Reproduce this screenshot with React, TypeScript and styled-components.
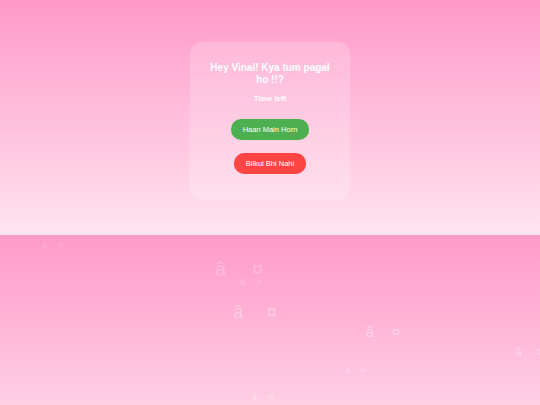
import styled, { createGlobalStyle } from "styled-components";

const GlobalStyle = createGlobalStyle`
  html {
    background: linear-gradient(to bottom, #ff99c8, #ffe4ef);
    background-size: 100% 235px;
    background-repeat: repeat-y;
    min-height: 100%;
  }
  body {
    margin: 0;
    font-family: "Liberation Sans", Arial, sans-serif;
  }
`;

const hearts = [
  { x: 42, y: 242, size: 9, alpha: 0.18 },
  { x: 215, y: 261, size: 20, alpha: 0.25 },
  { x: 240, y: 279, size: 9, alpha: 0.25 },
  { x: 233, y: 305, size: 18, alpha: 0.35 },
  { x: 366, y: 326, size: 14, alpha: 0.4 },
  { x: 515, y: 347, size: 12, alpha: 0.35 },
  { x: 346, y: 368, size: 8, alpha: 0.4 },
  { x: 252, y: 394, size: 9, alpha: 0.45 },
];

const App = () => {
  return (
    <>
      <GlobalStyle />
      <Page>
        <Card>
          <Title>Hey Vinal! Kya tum pagal ho !!?</Title>
          <TimeLeft>Time left</TimeLeft>
          <Actions>
            <Button $tone="yes">Haan Main Horn</Button>
            <Button $tone="no">Bilkul Bhi Nahi</Button>
          </Actions>
        </Card>
      </Page>
      <HeartLayer>
        {hearts.map((h, i) => (
          <Heart
            key={i}
            style={{
              left: h.x,
              top: h.y - h.size * 0.1,
              fontSize: h.size,
              opacity: h.alpha,
            }}
          >
            â¤
          </Heart>
        ))}
      </HeartLayer>
    </>
  );
};

const Page = styled.div`
  display: flex;
  justify-content: center;
  padding: 42px 0 35px;
`;

const Card = styled.div`
  width: 160px;
  height: 158px;
  box-sizing: border-box;
  padding: 20px 14px;
  border-radius: 12px;
  background: rgba(255, 255, 255, 0.2);
  box-shadow: 0 2px 10px rgba(255, 255, 255, 0.08);
  display: flex;
  flex-direction: column;
  align-items: center;
  text-align: center;
  color: #fff;
`;

const Title = styled.h2`
  margin: 0;
  font-size: 10px;
  line-height: 12px;
  font-weight: 700;
`;

const TimeLeft = styled.div`
  margin-top: 8px;
  font-size: 8px;
  font-weight: 700;
  line-height: 10px;
`;

const Actions = styled.div`
  display: flex;
  flex-direction: column;
  align-items: center;
  gap: 13px;
  margin-top: 15px;
`;

const Button = styled.button<{ $tone: "yes" | "no" }>`
  height: 21px;
  padding: 0 11.5px;
  border: none;
  border-radius: 10px;
  background: ${(p) => (p.$tone === "yes" ? "#4caf50" : "#ff4444")};
  color: #fff;
  font-family: "Liberation Sans", Arial, sans-serif;
  font-size: 7.5px;
  cursor: pointer;
`;

const HeartLayer = styled.div`
  position: fixed;
  inset: 0;
  overflow: hidden;
  pointer-events: none;
`;

const Heart = styled.span`
  position: absolute;
  color: #fff;
  line-height: 1;
  letter-spacing: 1.3em;
  white-space: nowrap;
  font-family: "Liberation Sans", Arial, sans-serif;
`;

export default App;
